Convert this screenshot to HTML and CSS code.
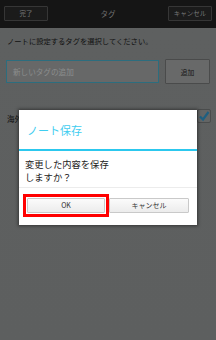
FILE: index.html
```html
<!DOCTYPE html>
<html lang="ja">
<head>
<meta charset="utf-8">
<link rel="stylesheet" href="styles.css">
</head>
<body>
<div class="screen">
  <header class="topbar">
    <button class="tb-btn">完了</button>
    <div class="tb-title">タグ</div>
    <button class="tb-btn">キャンセル</button>
  </header>
  <main class="content">
    <p class="hint">ノートに設定するタグを選択してください。</p>
    <div class="add-row">
      <div class="input">新しいタグの追加</div>
      <button class="add-btn">追加</button>
    </div>
    <div class="tag">
      <span class="tag-name">海外旅行</span>
      <span class="check">
        <svg width="14" height="14" viewBox="0 0 14 14"><path d="M3 7.5 L6 10.5 L11.5 3" fill="none" stroke="#1f5f80" stroke-width="2.2"/></svg>
      </span>
    </div>
  </main>
  <div class="dialog">
    <div class="d-title">ノート保存</div>
    <div class="d-bar"></div>
    <div class="d-msg">変更した内容を保存<br>しますか？</div>
    <div class="d-buttons">
      <div class="ok-wrap"><button class="d-btn">OK</button></div>
      <button class="d-btn">キャンセル</button>
    </div>
  </div>
</div>
</body>
</html>
```
FILE: styles.css
```css
* { box-sizing: border-box; }
html, body { margin: 0; padding: 0; }
body {
  width: 216px;
  height: 340px;
  overflow: hidden;
  font-family: "Noto Sans CJK JP", "Noto Sans", sans-serif;
  background: #5d5f5f;
}
.screen {
  position: relative;
  width: 216px;
  height: 340px;
  background: linear-gradient(#666868 0, #5e6060 30px, #5d5f5f 100%);
}
.topbar {
  height: 28px;
  background: #151515;
  display: flex;
  justify-content: space-between;
  align-items: flex-start;
  padding: 6px 4px 0;
  position: relative;
}
.tb-btn {
  width: 44px;
  height: 15px;
  border: 1px solid #363636;
  background: #1b1b1b;
  color: #767676;
  font-family: inherit;
  font-size: 6.5px;
  line-height: 13px;
  padding: 0;
  border-radius: 1px;
}
.tb-title {
  color: #707070;
  font-size: 7.5px;
  line-height: 15px;
}
.content {
  padding: 0 6px;
}
.hint {
  margin: 8px 0 0 1px;
  font-size: 7.3px;
  line-height: 10px;
  color: #111;
  white-space: nowrap;
}
.add-row {
  margin-top: 13px;
  display: flex;
  align-items: center;
  gap: 6px;
}
.input {
  width: 153px;
  height: 23px;
  border: 1px solid #2c6d7e;
  background: #676868;
  color: #8c8e8e;
  font-size: 7.6px;
  line-height: 21px;
  padding-left: 6px;
}
.add-btn {
  width: 45px;
  height: 25px;
  border: 1px solid #4a4b4b;
  background: #686969;
  color: #151515;
  font-family: inherit;
  font-size: 6.8px;
  padding: 0;
  border-radius: 1px;
}
.tag {
  margin-top: 21px;
  height: 26px;
  display: flex;
  align-items: center;
  justify-content: space-between;
  padding: 0 0 0 1px;
}
.tag-name {
  font-size: 7.5px;
  color: #111;
}
.check {
  width: 14px;
  height: 14px;
  border: 1px solid #4a4c4c;
  border-radius: 2px;
  background: #636565;
  display: flex;
  margin-right: -1px;
  margin-top: -4px;
}
.check svg { display: block; margin: -1px; }
.dialog {
  position: absolute;
  left: 19px;
  top: 110px;
  width: 178px;
  height: 115px;
  background: #fff;
  box-shadow: 0 0 3px 1px rgba(20, 20, 20, 0.55);
}
.d-title {
  height: 39px;
  padding: 2px 0 0 8px;
  font-size: 11px;
  line-height: 37px;
  color: #3fcdf0;
}
.d-bar {
  height: 2px;
  background: #2cc8ee;
}
.d-msg {
  height: 37px;
  padding: 7px 0 0 6px;
  font-size: 9.3px;
  line-height: 13px;
  color: #222;
  border-bottom: 1px solid #ececec;
}
.d-buttons {
  display: flex;
  gap: 4px;
  padding: 10px 8px 0;
}
.d-buttons > * { flex: 1; }
.ok-wrap {
  position: relative;
  display: flex;
}
.ok-wrap .d-btn { flex: 1; }
.ok-wrap::after {
  content: "";
  position: absolute;
  left: -4px;
  top: -4px;
  right: -4px;
  bottom: -4px;
  border: 3px solid #f00;
}
.d-btn {
  height: 15px;
  border: 1px solid #c9c9c9;
  background: linear-gradient(#fbfbfb, #ececec);
  color: #333;
  font-family: inherit;
  font-size: 7px;
  line-height: 13px;
  padding: 0;
  border-radius: 1px;
}
```
